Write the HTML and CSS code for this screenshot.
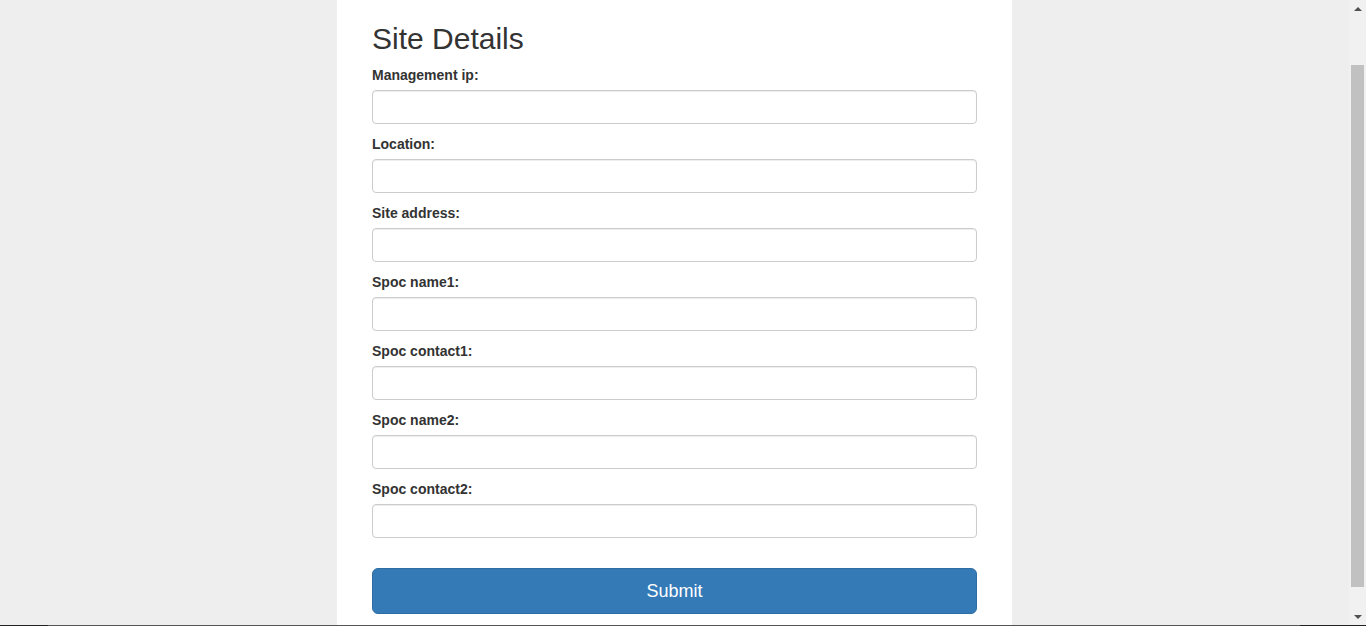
FILE: index.html
```html
<!DOCTYPE html>
<html>
<head>
<meta charset="utf-8">
<title>Site Details</title>
<link rel="stylesheet" href="styles.css">
</head>
<body>
<div class="viewport">
  <div class="main">
    <div class="panel">
      <h2 class="title">Site Details</h2>
      <form class="form">
        <div class="form-group"><label class="label">Management ip:</label><input class="control" type="text"></div>
        <div class="form-group"><label class="label">Location:</label><input class="control" type="text"></div>
        <div class="form-group"><label class="label">Site address:</label><input class="control" type="text"></div>
        <div class="form-group"><label class="label">Spoc name1:</label><input class="control" type="text"></div>
        <div class="form-group"><label class="label">Spoc contact1:</label><input class="control" type="text"></div>
        <div class="form-group"><label class="label">Spoc name2:</label><input class="control" type="text"></div>
        <div class="form-group"><label class="label">Spoc contact2:</label><input class="control" type="text"></div>
        <button class="btn" type="button">Submit</button>
      </form>
    </div>
  </div>
  <div class="scrollbar">
    <div class="arrow arrow-up"></div>
    <div class="track"><div class="thumb"></div></div>
    <div class="arrow arrow-down"></div>
  </div>
</div>
<div class="bottom-line"></div>
</body>
</html>
```
FILE: styles.css
```css
html, body {
  margin: 0;
  padding: 0;
  height: 626px;
  overflow: hidden;
}
body {
  font-family: "Liberation Sans", Arial, sans-serif;
  color: #333;
  display: flex;
  flex-direction: column;
}
.viewport {
  height: 625px;
  display: flex;
}
.main {
  flex: 1;
  background: #eeeeee;
  display: flex;
  justify-content: center;
}
.panel {
  width: 605px;
  background: #fff;
  padding: 22px 35px 0 35px;
}
.title {
  margin: 0 0 10px 0;
  font-size: 30px;
  line-height: 33px;
  font-weight: 500;
  color: #333;
}
.form {
  display: flex;
  flex-direction: column;
}
.form-group {
  display: flex;
  flex-direction: column;
  margin-bottom: 10px;
}
.label {
  font-size: 14px;
  line-height: 20px;
  font-weight: bold;
  margin-bottom: 5px;
}
.control {
  box-sizing: border-box;
  height: 34px;
  width: 100%;
  border: 1px solid #ccc;
  border-radius: 4px;
  box-shadow: inset 0 1px 1px rgba(0,0,0,.075);
  background: #fff;
  margin: 0;
  padding: 6px 12px;
  font-size: 14px;
}
.btn {
  margin-top: 20px;
  box-sizing: border-box;
  height: 46px;
  width: 100%;
  background: #337ab7;
  border: 1px solid #2e6da4;
  border-radius: 6px;
  color: #fff;
  font-family: "Liberation Sans", Arial, sans-serif;
  font-size: 18px;
  line-height: 24px;
  padding: 10px 16px;
}
.scrollbar {
  width: 17px;
  background: #f1f1f1;
  display: flex;
  flex-direction: column;
}
.arrow {
  height: 17px;
  display: flex;
  align-items: center;
  justify-content: center;
}
.arrow-up::before {
  content: "";
  border-left: 4px solid transparent;
  border-right: 4px solid transparent;
  border-bottom: 4px solid #505050;
}
.arrow-down::before {
  content: "";
  border-left: 4px solid transparent;
  border-right: 4px solid transparent;
  border-top: 4px solid #505050;
}
.track {
  flex: 1;
  display: flex;
  flex-direction: column;
  padding: 48px 2px 21px 2px;
}
.thumb {
  flex: 1;
  background: #c1c1c1;
}
.bottom-line {
  height: 1px;
  background: linear-gradient(to right, #222 0, #222 48px, #555 48px, #555 1300px, #222 1300px);
}
```
